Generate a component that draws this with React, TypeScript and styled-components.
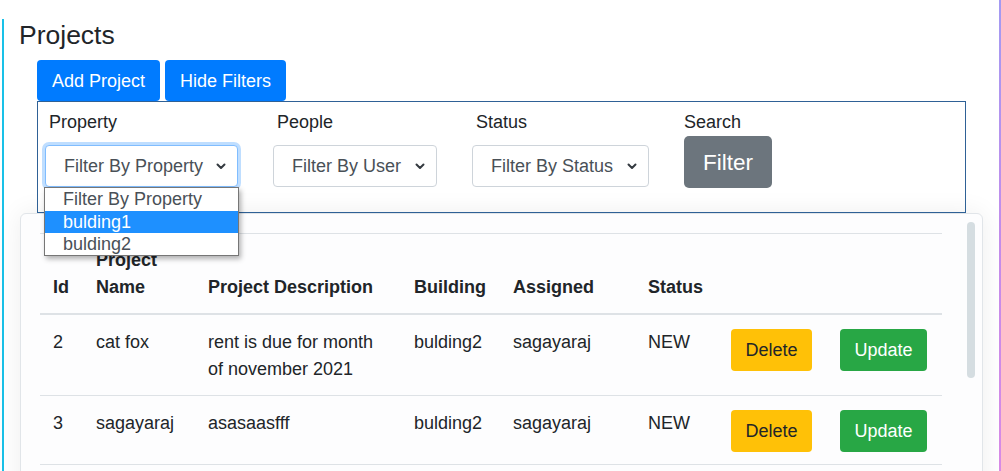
import React from "react";
import styled, { createGlobalStyle } from "styled-components";

const GlobalStyle = createGlobalStyle`
  html, body { margin: 0; padding: 0; background: #fff; }
  body {
    font-family: "Liberation Sans", Arial, sans-serif;
    color: #212529;
    -webkit-font-smoothing: antialiased;
  }
  * { box-sizing: border-box; }
`;

const Page = styled.div`
  width: 1001px;
  height: 471px;
  overflow: hidden;
  display: flex;
  padding-left: 2px;
  background: #fff;
`;

const LeftRail = styled.div`
  width: 2px;
  margin-top: 19px;
  background: #19c1e8;
  flex: none;
`;

const RightRail = styled.div`
  width: 2px;
  flex: none;
  background: linear-gradient(180deg, #a39af2 0%, #c38deb 50%, #d98be6 100%);
`;

const Content = styled.main`
  flex: 1;
  padding-top: 19px;
  display: flex;
  flex-direction: column;
  align-items: flex-start;
  min-width: 0;
`;

const Title = styled.h1`
  margin: 0 0 0 15px;
  font-size: 26.5px;
  line-height: 32px;
  font-weight: 400;
  color: #212529;
`;

const Toolbar = styled.div`
  display: flex;
  gap: 5px;
  margin: 9px 0 0 33px;
`;

const Button = styled.button<{ $tone: "primary" | "warning" | "success" | "secondary"; $lg?: boolean }>`
  display: inline-flex;
  align-items: center;
  justify-content: center;
  white-space: nowrap;
  height: ${(p) => (p.$lg ? "52px" : p.$tone === "primary" ? "41px" : "42px")};
  padding: ${(p) => (p.$lg ? "1px 18px 0" : p.$tone === "primary" ? "1px 14px 0" : "1px 13.5px 0")};
  border: 1px solid transparent;
  border-radius: ${(p) => (p.$lg ? "5px" : "4px")};
  font-family: "Liberation Sans", Arial, sans-serif;
  font-size: ${(p) => (p.$lg ? "22.5px" : "18px")};
  line-height: 1.5;
  cursor: pointer;
  background: ${(p) =>
    p.$tone === "primary"
      ? "#007bff"
      : p.$tone === "warning"
      ? "#ffc107"
      : p.$tone === "success"
      ? "#28a745"
      : "#6c757d"};
  color: ${(p) => (p.$tone === "warning" ? "#212529" : "#fff")};
`;

const FilterBox = styled.section`
  position: relative;
  z-index: 2;
  width: 929px;
  margin-left: 33px;
  border: 1px solid #2f6196;
  padding: 6px 0 24px 7px;
  display: flex;
  align-items: flex-start;
  gap: 35px;
`;

const FilterGroup = styled.div`
  position: relative;
  display: flex;
  flex-direction: column;
  align-items: flex-start;
`;

const Label = styled.label<{ $inset?: boolean }>`
  font-size: 18px;
  line-height: 27px;
  padding-top: 1px;
  margin-bottom: -1px;
  color: #212529;
  padding-left: ${(p) => (p.$inset ? "4px" : "0")};
`;

const SelectBox = styled.div<{ $w: number; $focus?: boolean }>`
  width: ${(p) => p.$w}px;
  height: 42px;
  margin-top: 10px;
  display: flex;
  align-items: center;
  justify-content: space-between;
  padding: 1px 11px 0 18px;
  border: 1px solid ${(p) => (p.$focus ? "#80bdff" : "#ced4da")};
  border-radius: 4px;
  background: #fff;
  font-size: 18px;
  color: #495057;
  box-shadow: ${(p) => (p.$focus ? "0 0 0 3px rgba(0, 123, 255, 0.25)" : "none")};
  white-space: nowrap;
  overflow: hidden;
`;

const Chevron = styled.svg`
  width: 10px;
  height: 7px;
  flex: none;
`;

const DropList = styled.ul`
  position: absolute;
  top: 100%;
  left: -1px;
  width: 195px;
  margin: 0;
  padding: 0;
  list-style: none;
  background: #fff;
  border: 1px solid #767676;
  box-shadow: 2px 3px 5px rgba(0, 0, 0, 0.3);
  z-index: 10;
`;

const DropItem = styled.li<{ $active?: boolean }>`
  height: ${(p) => (p.$active ? "22px" : "22.5px")};
  line-height: 22px;
  padding-left: 18px;
  font-size: 18px;
  color: ${(p) => (p.$active ? "#fff" : "#495057")};
  background: ${(p) => (p.$active ? "#1e90ff" : "transparent")};
  white-space: nowrap;
`;

const SearchButton = styled(Button)`
  margin-top: 1px;
`;

const Card = styled.section`
  position: relative;
  z-index: 1;
  width: 963px;
  min-height: 320px;
  margin-left: 16px;
  border: 1px solid #e1e5e9;
  border-radius: 6px;
  background: #fdfdfe;
  box-shadow: 0 0 26px rgba(0, 0, 0, 0.07);
  display: flex;
  align-items: flex-start;
  padding: 19px 7px 0 19px;
  flex: none;
`;

const ScrollThumb = styled.div`
  width: 8px;
  height: 156px;
  margin: -11px 0 0 25px;
  border-radius: 4px;
  background: #d5dde1;
  flex: none;
`;

const Table = styled.table`
  width: 902px;
  border-collapse: collapse;
  table-layout: fixed;
  font-size: 18px;
  line-height: 27px;
  color: #212529;
`;

const Th = styled.th`
  text-align: left;
  font-weight: 700;
  vertical-align: bottom;
  padding: 13px 13px 12px;
  border-top: 1px solid #dee2e6;
  border-bottom: 2px solid #dee2e6;
`;

const Td = styled.td`
  vertical-align: top;
  padding: 14px 13px 12px;
  border-bottom: 1px solid #dee2e6;
`;

const columns = [43, 112, 206, 99, 135, 83, 109, 115];

const rows = [
  { id: 2, name: "cat fox", desc: "rent is due for month of november 2021", building: "bulding2", assigned: "sagayaraj", status: "NEW" },
  { id: 3, name: "sagayaraj", desc: "asasaasfff", building: "bulding2", assigned: "sagayaraj", status: "NEW" },
];

const ChevronIcon = () => (
  <Chevron viewBox="0 0 10 7">
    <polyline points="1.5,1.5 5,5 8.5,1.5" fill="none" stroke="#343a40" strokeWidth="2" strokeLinecap="round" strokeLinejoin="round" />
  </Chevron>
);

export default function App() {
  return (
    <>
      <GlobalStyle />
      <Page>
        <LeftRail />
        <Content>
          <Title>Projects</Title>
          <Toolbar>
            <Button $tone="primary">Add Project</Button>
            <Button $tone="primary">Hide Filters</Button>
          </Toolbar>
          <FilterBox>
            <FilterGroup>
              <Label $inset>Property</Label>
              <SelectBox $w={193} $focus>
                <span>Filter By Property</span>
                <ChevronIcon />
              </SelectBox>
              <DropList>
                <DropItem>Filter By Property</DropItem>
                <DropItem $active>bulding1</DropItem>
                <DropItem>bulding2</DropItem>
              </DropList>
            </FilterGroup>
            <FilterGroup>
              <Label $inset>People</Label>
              <SelectBox $w={164}>
                <span>Filter By User</span>
                <ChevronIcon />
              </SelectBox>
            </FilterGroup>
            <FilterGroup>
              <Label $inset>Status</Label>
              <SelectBox $w={177}>
                <span>Filter By Status</span>
                <ChevronIcon />
              </SelectBox>
            </FilterGroup>
            <FilterGroup>
              <Label>Search</Label>
              <SearchButton $tone="secondary" $lg>Filter</SearchButton>
            </FilterGroup>
          </FilterBox>
          <Card>
            <Table>
              <colgroup>
                {columns.map((w, i) => (
                  <col key={i} style={{ width: w }} />
                ))}
              </colgroup>
              <thead>
                <tr>
                  <Th>Id</Th>
                  <Th>Project Name</Th>
                  <Th>Project Description</Th>
                  <Th>Building</Th>
                  <Th>Assigned</Th>
                  <Th>Status</Th>
                  <Th></Th>
                  <Th></Th>
                </tr>
              </thead>
              <tbody>
                {rows.map((r) => (
                  <tr key={r.id}>
                    <Td>{r.id}</Td>
                    <Td>{r.name}</Td>
                    <Td>{r.desc}</Td>
                    <Td>{r.building}</Td>
                    <Td>{r.assigned}</Td>
                    <Td>{r.status}</Td>
                    <Td>
                      <Button $tone="warning">Delete</Button>
                    </Td>
                    <Td>
                      <Button $tone="success">Update</Button>
                    </Td>
                  </tr>
                ))}
              </tbody>
            </Table>
            <ScrollThumb />
          </Card>
        </Content>
        <RightRail />
      </Page>
    </>
  );
}
